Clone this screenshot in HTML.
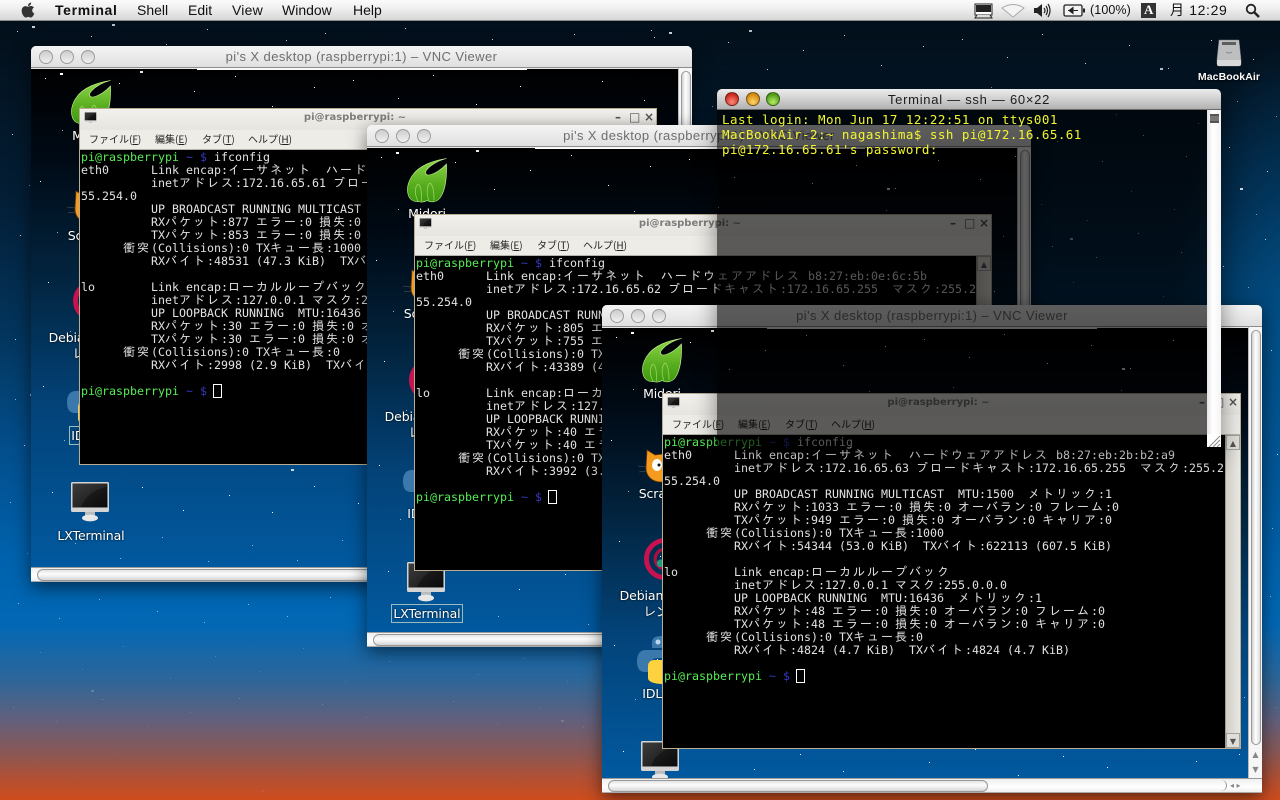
<!DOCTYPE html>
<html lang="ja"><head><meta charset="utf-8"><title>Terminal</title>
<style>
*{box-sizing:border-box}
html,body{margin:0;padding:0;width:1280px;height:800px;overflow:hidden;background:#000}
body{position:relative;font-family:"Liberation Sans","Noto Sans CJK JP",sans-serif}
.a,.a>*{position:absolute}
#wall{left:0;top:0;width:1280px;height:800px;background:radial-gradient(130px 300px at 1300px 340px,rgba(0,95,160,.75),rgba(0,95,160,0)),linear-gradient(180deg,#020d19 0,#03121f 60px,#031e36 200px,#03365f 340px,#034e8c 450px,#0062ad 560px,#0268b5 625px,#2d6699 680px,#62607c 720px,#8c5752 755px,#b45032 780px,#cf4c1c 800px)}
#wm{position:absolute;left:0;top:0;width:1280px;height:800px;-webkit-mask-image:linear-gradient(#000 0,#000 75%,rgba(0,0,0,.15) 92%);mask-image:linear-gradient(#000 0,#000 75%,rgba(0,0,0,.15) 92%)}
.sf{position:absolute;left:0;top:0;width:0;height:0}
.sf span{position:absolute;left:0;top:0;display:block}
.s1{width:1px;height:1px;background:transparent;box-shadow:14px 9px #fff,51px 33px #fff,88px 14px #fff,127px 41px #fff,163px 22px #fff,204px 7px #fff,241px 37px #fff,283px 18px #fff,322px 11px #fff,367px 29px #fff,402px 6px #fff,445px 35px #fff,489px 17px #fff,528px 40px #fff,571px 12px #fff,613px 31px #fff,648px 8px #fff,9px 112px #fff,46px 127px #fff,94px 108px #fff,133px 131px #fff,171px 118px #fff,212px 137px #fff,254px 116px #fff,291px 129px #fff,336px 104px #fff,378px 141px #fff,417px 113px #fff,462px 133px #fff,503px 107px #fff,546px 128px #fff,589px 119px #fff,627px 143px #fff,17px 213px #fff,58px 228px #fff,98px 209px #fff,156px 221px #fff,203px 232px #fff,247px 214px #fff,286px 226px #fff,329px 207px #fff,371px 234px #fff,412px 218px #fff,456px 229px #fff,498px 205px #fff,541px 224px #fff,583px 238px #fff,625px 211px #fff,12px 317px #fff,55px 331px #fff,101px 309px #fff,147px 336px #fff,189px 322px #fff,238px 308px #fff,276px 339px #fff,321px 314px #fff,365px 327px #fff,409px 342px #fff,452px 311px #fff,496px 333px #fff,539px 318px #fff,582px 337px #fff,631px 322px #fff,21px 423px #fff,63px 437px #fff,111px 418px #fff,152px 441px #fff,198px 426px #fff,241px 443px #fff,283px 417px #fff,327px 434px #fff,373px 421px #fff,416px 447px #fff,461px 428px #fff,505px 439px #fff,549px 415px #fff,594px 433px #fff,637px 426px #fff}
.s2{width:1px;height:1px;background:transparent;box-shadow:31px 61px #9fb4c6,72px 78px #9fb4c6,109px 66px #9fb4c6,148px 89px #9fb4c6,186px 71px #9fb4c6,224px 94px #9fb4c6,267px 63px #9fb4c6,309px 82px #9fb4c6,351px 59px #9fb4c6,394px 91px #9fb4c6,431px 68px #9fb4c6,476px 86px #9fb4c6,519px 62px #9fb4c6,558px 95px #9fb4c6,597px 73px #9fb4c6,636px 88px #9fb4c6,26px 163px #9fb4c6,67px 178px #9fb4c6,104px 159px #9fb4c6,142px 184px #9fb4c6,193px 167px #9fb4c6,233px 181px #9fb4c6,274px 161px #9fb4c6,318px 189px #9fb4c6,359px 158px #9fb4c6,401px 176px #9fb4c6,447px 192px #9fb4c6,491px 163px #9fb4c6,534px 181px #9fb4c6,577px 155px #9fb4c6,616px 186px #9fb4c6,655px 169px #9fb4c6,39px 262px #9fb4c6,81px 279px #9fb4c6,122px 256px #9fb4c6,169px 288px #9fb4c6,214px 266px #9fb4c6,259px 281px #9fb4c6,302px 258px #9fb4c6,344px 291px #9fb4c6,388px 271px #9fb4c6,433px 254px #9fb4c6,477px 284px #9fb4c6,523px 268px #9fb4c6,566px 291px #9fb4c6,608px 259px #9fb4c6,649px 277px #9fb4c6,33px 371px #9fb4c6,76px 388px #9fb4c6,118px 362px #9fb4c6,161px 379px #9fb4c6,207px 391px #9fb4c6,252px 366px #9fb4c6,294px 384px #9fb4c6,339px 359px #9fb4c6,383px 377px #9fb4c6,424px 393px #9fb4c6,469px 368px #9fb4c6,513px 386px #9fb4c6,557px 361px #9fb4c6,601px 382px #9fb4c6,642px 369px #9fb4c6,44px 474px #9fb4c6,89px 489px #9fb4c6,131px 468px #9fb4c6,177px 492px #9fb4c6,221px 476px #9fb4c6,266px 491px #9fb4c6,311px 471px #9fb4c6,356px 486px #9fb4c6,398px 464px #9fb4c6,443px 493px #9fb4c6,487px 477px #9fb4c6,531px 496px #9fb4c6,573px 468px #9fb4c6,619px 487px #9fb4c6}
.s3{width:3px;height:2px;background:transparent;box-shadow:29px 4px #fff,109px 2px #dfe9f2,200px 70px #cfd9e2,340px 120px #cfd9e2,520px 40px #dfe9f2,90px 300px #cfd9e2,430px 210px #cfd9e2,600px 160px #fff,260px 400px #cfd9e2,560px 330px #fff}
#bar{left:0;top:0;width:1280px;height:21px;background:linear-gradient(#fbfbfb,#f0f0f0 40%,#d6d6d6);border-bottom:1px solid #8a8a8a;z-index:50;color:#111;font-size:14px;line-height:21px}
#bar>span{top:0;white-space:nowrap}
.vnc{position:absolute;background:#e8e8e8;border-radius:5px 5px 0 0;box-shadow:0 5px 18px rgba(0,0,0,.55);overflow:hidden}
.tb{position:absolute;left:0;right:0;top:0;height:22px;background:linear-gradient(#f4f4f4,#e0e0e0);border-bottom:1px solid #8c8c8c;color:#6e6e6e;font-size:13px;line-height:22px;text-align:center;letter-spacing:.42px}
.dot{position:absolute;top:4px;width:14px;height:14px;border-radius:50%;background:linear-gradient(#cdcdcd,#f0f0f0);border:1px solid #9c9c9c}
.wl{position:absolute;top:22px;height:2px;width:330px;background:#f8f8f8;z-index:2}
.vp{position:absolute;left:0;top:23px;right:14px;bottom:15px;overflow:hidden;background:linear-gradient(180deg,#000 0,#000a15 18%,#02243f 42%,#034379 68%,#01599f 100%)}
.vs{position:absolute;right:0;top:22px;bottom:15px;width:14px;background:#f6f6f6;border-left:1px solid #bbb}
.vs u{position:absolute;left:2px;right:1px;top:3px;bottom:33px;border-radius:6px;background:linear-gradient(90deg,#d0d0d0,#fff 45%,#ddd);border:1px solid #999}
.hs{position:absolute;left:0;right:0;bottom:0;height:15px;background:linear-gradient(#efefef,#fff 60%,#eee);border-top:1px solid #9a9a9a;border-bottom:1px solid #aaa}
.hs u{position:absolute;left:6px;width:380px;top:1px;bottom:0;border-radius:7px;background:linear-gradient(#e4e4e4,#fcfcfc 40%,#f2f2f2 60%,#d4d4d4);border:1px solid #999}
.ic{position:absolute;overflow:visible}
.lb{position:absolute;left:0;width:120px;text-align:center;color:#fff;font:12.5px/16px "DejaVu Sans","Noto Sans CJK JP",sans-serif;text-shadow:0 0 2px #000;white-space:nowrap;letter-spacing:-.1px}
.lb span{padding:0 1px}
.box span{outline:1px solid #9bb;padding:1px 1px}
.xt{position:absolute;background:#ecebe6;border:1px solid #b9ad91;overflow:hidden}
.xh{position:absolute;left:0;right:0;top:0;height:21px;background:linear-gradient(#f1f0ec,#e7e5df);color:#7d7d7d;font:bold 10px/17px "DejaVu Sans",sans-serif;text-align:center;padding-right:26px}
.xh em{position:absolute;top:0;font:bold 12px/17px "DejaVu Sans",sans-serif;color:#555}
.xm{position:absolute;left:0;right:0;top:21px;height:20px;border-bottom:1px solid #b4b2aa;background:#eeece7;color:#222;font:10px/18px "Noto Sans CJK JP",sans-serif}
.xm span{position:absolute;top:0;white-space:nowrap}
.xb{position:absolute;left:0;right:15px;top:41px;bottom:0;background:#000;overflow:hidden;color:#e2e2e2;font:11.63px/13px "DejaVu Sans Mono",monospace;padding:1px 0 0 1px}
.xb div{height:13px;white-space:pre;overflow:visible}
.xb b{font:12px/13px "IPAGothic","Noto Sans CJK JP",sans-serif;letter-spacing:2px}
.xb i{font-style:normal;color:#55ee55}
.xb s{text-decoration:none;color:#3338c0}
.xb tt{display:inline-block;width:9px;height:14px;border:1px solid #fff;vertical-align:top;margin:-1px 0 0 -1px;font-size:0}
.xs{position:absolute;right:0;top:41px;bottom:0;width:15px;background:linear-gradient(90deg,#cfcdc6,#e9e8e3);border-left:1px solid #9f9d96}
.xs u,.xs em{position:absolute;left:0;right:0;height:15px;background:#e0ded8;color:#555;font:8px/15px "DejaVu Sans",sans-serif;text-align:center;text-decoration:none;border:1px solid #a4a29c}
#ssh{position:absolute;left:717px;top:89px;width:504px;height:358px;z-index:40;box-shadow:0 6px 24px rgba(0,0,0,.45);border-radius:5px 5px 0 0}
#sst{position:absolute;left:0;top:0;right:0;height:21px;border-radius:5px 5px 0 0;background:linear-gradient(#ececec,#cdcdcd 55%,#b1b1b1);border-bottom:1px solid #6a6a6a;color:#1c1c1c;font-size:13px;line-height:21px;text-align:center;letter-spacing:.72px}
#ssb{position:absolute;left:0;top:21px;width:490px;bottom:0;background:rgba(0,0,0,.62);color:#f4f62e;font:12.5px/15px "DejaVu Sans Mono",monospace;letter-spacing:.47px;padding:2px 0 0 5px;white-space:pre}
#ssv{position:absolute;right:0;top:21px;width:14px;bottom:0;background:linear-gradient(90deg,#e4e4e4,#fff 40%,#f4f4f4)}
.tl{position:absolute;top:3px;width:14px;height:14px;border-radius:50%;border:1px solid rgba(0,0,0,.45)}
</style></head><body>
<svg width="0" height="0" style="position:absolute"><defs>
<linearGradient id="gl" x1="0" y1="0" x2="0" y2="1"><stop offset="0" stop-color="#8fd94a"/><stop offset=".6" stop-color="#58ad1e"/><stop offset="1" stop-color="#3f9a10"/></linearGradient>
<linearGradient id="sc" x1="0" y1="0" x2="1" y2="1"><stop offset="0" stop-color="#3d3d3d"/><stop offset="1" stop-color="#111"/></linearGradient>
<symbol id="mid" viewBox="0 0 40 45"><path d="M39.500 .5C28 2 12 7 5 18C1 24-.5 31 1 36C2 41 6 44 11 43.500C14 44.500 18 44 20 42.500C24 45 30 44 33 40C38 33 40 20 39.500 6C35 11 28 16 22 17C19 17.500 18 15 19 13C22 8 30 3 39.500 .5Z" fill="url(#gl)" stroke="#c8f09a" stroke-width=".6"/><path d="M11 43C7 36 8 28 11 26C14 27 15 36 14.500 43M22 42.500C19 36 20 27 23 25C26 27 27 35 27 42" fill="none" stroke="#b4e87c" stroke-width=".8" opacity=".7"/></symbol>
<symbol id="cat" viewBox="0 0 50 40"><path d="M0 21L8 22M1 27L8 26" stroke="#bbb" stroke-width=".5" opacity=".45"/><path d="M9 5L17 10C22 9 27 9 31 10L38 4L39 22C39 32 30 37 23 37C14 37 8 31 8 23Z" fill="#f49a1e" stroke="#6b3a08" stroke-width=".8"/><ellipse cx="19" cy="20" rx="5" ry="6" fill="#fff"/><ellipse cx="32" cy="20" rx="5" ry="6" fill="#fff"/><circle cx="21" cy="20" r="1.500" fill="#111"/><circle cx="30" cy="20" r="1.500" fill="#111"/></symbol>
<symbol id="deb" viewBox="0 0 40 44"><circle cx="20" cy="22" r="17" fill="none" stroke="#c8124f" stroke-width="4.500"/><path d="M20 13a9 9 0 1 0 0 18" fill="none" stroke="#a8103f" stroke-width="3"/><circle cx="16" cy="26" r="3.500" fill="#1f9d7f"/></symbol>
<symbol id="py" viewBox="0 0 50 48"><path d="M25 0C17 0 15 3 15 7V12H26V14H9C3 14 0 18 0 25C0 33 3 36 8 36H13V29C13 24 17 22 21 22H31C35 22 37 20 37 16V7C37 3 33 0 25 0Z" fill="#3b78ab"/><circle cx="21" cy="6" r="2.500" fill="#bcd7ee"/><path d="M35 14V21C35 25 31 24 27 24H17C13 24 11 27 11 30V42C11 46 18 48 26 48C33 48 37 45 37 42V37H26V35H42C48 35 50 31 50 25C50 18 47 14 43 14Z" fill="#fdd23e"/></symbol>
<symbol id="mon" viewBox="0 0 38 40"><rect x="0" y="0" width="38" height="30" rx="1.500" fill="#d4d4d4"/><rect x="1.500" y="1.500" width="35" height="24" fill="url(#sc)"/><path d="M10 25C14 14 24 7 36 5V25Z" fill="#000" opacity=".35"/><rect x="14" y="30" width="10" height="4" fill="#bbb"/><ellipse cx="19" cy="36" rx="8" ry="3.400" fill="#e8e8e8"/></symbol>
</defs></svg>

<div id="wall" class="a"><div id="wm">
 <div class="sf" style="left:3px;top:22px;opacity:.8"><span class="s1"></span><span class="s2"></span><span class="s3"></span></div>
 <div class="sf" style="left:640px;top:28px;opacity:.8"><span class="s1"></span><span class="s2"></span><span class="s3"></span></div>
 <div class="sf" style="left:1px;top:390px;opacity:.6"><span class="s1"></span><span class="s2"></span><span class="s3"></span></div>
 <div class="sf" style="left:645px;top:385px;opacity:.6"><span class="s1"></span><span class="s2"></span><span class="s3"></span></div>
</div></div>

<!-- WINDOW 1 -->
<div class="vnc" style="left:31px;top:46px;width:661px;height:536px;z-index:1">
 <div class="tb">pi's X desktop (raspberrypi:1) – VNC Viewer</div>
 <div class="dot" style="left:8px"></div><div class="dot" style="left:29px"></div><div class="dot" style="left:50px"></div>
 <div class="vp"><div class="sf"><span class="s1"></span><span class="s2"></span><span class="s3"></span></div>
  <svg class="ic" style="left:40px;top:11px" width="40" height="45"><use href="#mid"/></svg>
  <div class="lb" style="top:59px">Midori</div>
  <svg class="ic" style="left:36px;top:117px" width="50" height="40"><use href="#cat"/></svg>
  <div class="lb" style="top:159px">Scratch</div>
  <svg class="ic" style="left:41px;top:208px" width="44" height="48"><use href="#deb"/></svg>
  <div class="lb" style="top:261px">Debian リファ<br>レンス</div>
  <svg class="ic" style="left:36px;top:308px" width="50" height="48"><use href="#py"/></svg>
  <div class="lb box" style="top:359px"><span>IDLE 3</span></div>
  <svg class="ic" style="left:40px;top:413px" width="38" height="40"><use href="#mon"/></svg>
  <div class="lb" style="top:459px">LXTerminal</div>
 </div>
 <div class="wl" style="left:166px"></div>
 <div class="vs"><u></u></div>
 <div class="hs"><u></u></div>
 <div class="xt" style="left:48px;top:62px;width:578px;height:357px">
  <div class="xh"><svg class="ic" style="left:4px;top:3px" width="13" height="13"><use href="#mon"/></svg>pi@raspberrypi: ~<em style="left:535px">–</em><em style="left:549px">□</em><em style="left:564px">×</em></div>
  <div class="xm"><span style="left:9px">ファイル(<u>F</u>)</span><span style="left:75px">編集(<u>E</u>)</span><span style="left:122px">タブ(<u>T</u>)</span><span style="left:168px">ヘルプ(<u>H</u>)</span></div>
  <div class="xb"><div><i>pi@raspberrypi</i> <s>~ $</s> ifconfig</div>
<div>eth0      Link encap:<b>イーサネット</b>  <b>ハードウェアアドレス</b> b8:27:eb:c0:b4:dd</div>
<div>          inet<b>アドレス</b>:172.16.65.61 <b>ブロードキャスト</b>:172.16.65.255  <b>マスク</b>:255.2</div>
<div>55.254.0</div>
<div>          UP BROADCAST RUNNING MULTICAST  MTU:1500  <b>メトリック</b>:1</div>
<div>          RX<b>パケット</b>:877 <b>エラー</b>:0 <b>損失</b>:0 <b>オーバラン</b>:0 <b>フレーム</b>:0</div>
<div>          TX<b>パケット</b>:853 <b>エラー</b>:0 <b>損失</b>:0 <b>オーバラン</b>:0 <b>キャリア</b>:0</div>
<div>      <b>衝突</b>(Collisions):0 TX<b>キュー長</b>:1000</div>
<div>          RX<b>バイト</b>:48531 (47.3 KiB)  TX<b>バイト</b>:514322 (502.2 KiB)</div>
<div> </div>
<div>lo        Link encap:<b>ローカルループバック</b></div>
<div>          inet<b>アドレス</b>:127.0.0.1 <b>マスク</b>:255.0.0.0</div>
<div>          UP LOOPBACK RUNNING  MTU:16436  <b>メトリック</b>:1</div>
<div>          RX<b>パケット</b>:30 <b>エラー</b>:0 <b>損失</b>:0 <b>オーバラン</b>:0 <b>フレーム</b>:0</div>
<div>          TX<b>パケット</b>:30 <b>エラー</b>:0 <b>損失</b>:0 <b>オーバラン</b>:0 <b>キャリア</b>:0</div>
<div>      <b>衝突</b>(Collisions):0 TX<b>キュー長</b>:0</div>
<div>          RX<b>バイト</b>:2998 (2.9 KiB)  TX<b>バイト</b>:2998 (2.9 KiB)</div>
<div> </div>
<div><i>pi@raspberrypi</i> <s>~ $</s> <tt>_</tt></div></div>
  <div class="xs"><em style="top:0">▲</em><em style="bottom:0">▼</em></div>
 </div>
</div>

<!-- WINDOW 2 -->
<div class="vnc" style="left:367px;top:125px;width:664px;height:522px;z-index:2">
 <div class="tb">pi's X desktop (raspberrypi:1) – VNC Viewer</div>
 <div class="dot" style="left:8px"></div><div class="dot" style="left:29px"></div><div class="dot" style="left:50px"></div>
 <div class="vp"><div class="sf"><span class="s1"></span><span class="s2"></span><span class="s3"></span></div>
  <svg class="ic" style="left:40px;top:10px" width="40" height="45"><use href="#mid"/></svg>
  <div class="lb" style="top:58px">Midori</div>
  <svg class="ic" style="left:36px;top:117px" width="50" height="40"><use href="#cat"/></svg>
  <div class="lb" style="top:158px">Scratch</div>
  <svg class="ic" style="left:41px;top:208px" width="44" height="48"><use href="#deb"/></svg>
  <div class="lb" style="top:261px">Debian リファ<br>レンス</div>
  <svg class="ic" style="left:36px;top:308px" width="50" height="48"><use href="#py"/></svg>
  <div class="lb" style="top:358px">IDLE 3</div>
  <svg class="ic" style="left:40px;top:414px" width="38" height="40"><use href="#mon"/></svg>
  <div class="lb box" style="top:458px"><span>LXTerminal</span></div>
 </div>
 <div class="wl" style="left:168px"></div>
 <div class="vs"><u></u></div>
 <div class="hs"><u></u></div>
 <div class="xt" style="left:47px;top:89px;width:578px;height:357px">
  <div class="xh"><svg class="ic" style="left:4px;top:3px" width="13" height="13"><use href="#mon"/></svg>pi@raspberrypi: ~<em style="left:535px">–</em><em style="left:549px">□</em><em style="left:564px">×</em></div>
  <div class="xm"><span style="left:9px">ファイル(<u>F</u>)</span><span style="left:75px">編集(<u>E</u>)</span><span style="left:122px">タブ(<u>T</u>)</span><span style="left:168px">ヘルプ(<u>H</u>)</span></div>
  <div class="xb"><div><i>pi@raspberrypi</i> <s>~ $</s> ifconfig</div>
<div>eth0      Link encap:<b>イーサネット</b>  <b>ハードウェアアドレス</b> b8:27:eb:0e:6c:5b</div>
<div>          inet<b>アドレス</b>:172.16.65.62 <b>ブロードキャスト</b>:172.16.65.255  <b>マスク</b>:255.2</div>
<div>55.254.0</div>
<div>          UP BROADCAST RUNNING MULTICAST  MTU:1500  <b>メトリック</b>:1</div>
<div>          RX<b>パケット</b>:805 <b>エラー</b>:0 <b>損失</b>:0 <b>オーバラン</b>:0 <b>フレーム</b>:0</div>
<div>          TX<b>パケット</b>:755 <b>エラー</b>:0 <b>損失</b>:0 <b>オーバラン</b>:0 <b>キャリア</b>:0</div>
<div>      <b>衝突</b>(Collisions):0 TX<b>キュー長</b>:1000</div>
<div>          RX<b>バイト</b>:43389 (42.3 KiB)  TX<b>バイト</b>:499120 (487.4 KiB)</div>
<div> </div>
<div>lo        Link encap:<b>ローカルループバック</b></div>
<div>          inet<b>アドレス</b>:127.0.0.1 <b>マスク</b>:255.0.0.0</div>
<div>          UP LOOPBACK RUNNING  MTU:16436  <b>メトリック</b>:1</div>
<div>          RX<b>パケット</b>:40 <b>エラー</b>:0 <b>損失</b>:0 <b>オーバラン</b>:0 <b>フレーム</b>:0</div>
<div>          TX<b>パケット</b>:40 <b>エラー</b>:0 <b>損失</b>:0 <b>オーバラン</b>:0 <b>キャリア</b>:0</div>
<div>      <b>衝突</b>(Collisions):0 TX<b>キュー長</b>:0</div>
<div>          RX<b>バイト</b>:3992 (3.8 KiB)  TX<b>バイト</b>:3992 (3.8 KiB)</div>
<div> </div>
<div><i>pi@raspberrypi</i> <s>~ $</s> <tt>_</tt></div></div>
  <div class="xs"><em style="top:0">▲</em><em style="bottom:0">▼</em></div>
 </div>
</div>

<!-- WINDOW 3 -->
<div class="vnc" style="left:602px;top:305px;width:660px;height:488px;z-index:3">
 <div class="tb">pi's X desktop (raspberrypi:1) – VNC Viewer</div>
 <div class="dot" style="left:8px"></div><div class="dot" style="left:29px"></div><div class="dot" style="left:50px"></div>
 <div class="vp"><div class="sf"><span class="s1"></span><span class="s2"></span><span class="s3"></span></div>
  <svg class="ic" style="left:40px;top:10px" width="40" height="45"><use href="#mid"/></svg>
  <div class="lb" style="top:58px">Midori</div>
  <svg class="ic" style="left:36px;top:117px" width="50" height="40"><use href="#cat"/></svg>
  <div class="lb" style="top:158px">Scratch</div>
  <svg class="ic" style="left:41px;top:207px" width="44" height="48"><use href="#deb"/></svg>
  <div class="lb" style="top:260px">Debian リファ<br>レンス</div>
  <svg class="ic" style="left:35px;top:308px" width="50" height="48"><use href="#py"/></svg>
  <div class="lb" style="top:358px">IDLE 3</div>
  <svg class="ic" style="left:39px;top:413px" width="38" height="40"><use href="#mon"/></svg>
 </div>
 <div class="wl" style="left:165px"></div>
 <div class="vs"><u></u><em style="position:absolute;left:0;right:0;bottom:18px;font:8px/10px 'DejaVu Sans';color:#888;text-align:center;font-style:normal">▲</em><em style="position:absolute;left:0;right:0;bottom:3px;font:8px/10px 'DejaVu Sans';color:#888;text-align:center;font-style:normal">▼</em></div>
 <div class="hs"><u style="width:380px"></u><span style="position:absolute;left:613px;top:1px;width:12px;bottom:1px;border-right:1px solid #999;border-radius:0 7px 7px 0"></span><span style="position:absolute;left:628px;top:0;font:8px/14px 'DejaVu Sans';color:#888">◂ ▸</span></div>
 <div class="xt" style="left:60px;top:88px;width:579px;height:356px">
  <div class="xh"><svg class="ic" style="left:4px;top:3px" width="13" height="13"><use href="#mon"/></svg>pi@raspberrypi: ~<em style="left:536px">–</em><em style="left:550px">□</em><em style="left:565px">×</em></div>
  <div class="xm" style="line-height:17px"><span style="left:9px">ファイル(<u>F</u>)</span><span style="left:75px">編集(<u>E</u>)</span><span style="left:122px">タブ(<u>T</u>)</span><span style="left:168px">ヘルプ(<u>H</u>)</span></div>
  <div class="xb"><div><i>pi@raspberrypi</i> <s>~ $</s> ifconfig</div>
<div>eth0      Link encap:<b>イーサネット</b>  <b>ハードウェアアドレス</b> b8:27:eb:2b:b2:a9</div>
<div>          inet<b>アドレス</b>:172.16.65.63 <b>ブロードキャスト</b>:172.16.65.255  <b>マスク</b>:255.2</div>
<div>55.254.0</div>
<div>          UP BROADCAST RUNNING MULTICAST  MTU:1500  <b>メトリック</b>:1</div>
<div>          RX<b>パケット</b>:1033 <b>エラー</b>:0 <b>損失</b>:0 <b>オーバラン</b>:0 <b>フレーム</b>:0</div>
<div>          TX<b>パケット</b>:949 <b>エラー</b>:0 <b>損失</b>:0 <b>オーバラン</b>:0 <b>キャリア</b>:0</div>
<div>      <b>衝突</b>(Collisions):0 TX<b>キュー長</b>:1000</div>
<div>          RX<b>バイト</b>:54344 (53.0 KiB)  TX<b>バイト</b>:622113 (607.5 KiB)</div>
<div> </div>
<div>lo        Link encap:<b>ローカルループバック</b></div>
<div>          inet<b>アドレス</b>:127.0.0.1 <b>マスク</b>:255.0.0.0</div>
<div>          UP LOOPBACK RUNNING  MTU:16436  <b>メトリック</b>:1</div>
<div>          RX<b>パケット</b>:48 <b>エラー</b>:0 <b>損失</b>:0 <b>オーバラン</b>:0 <b>フレーム</b>:0</div>
<div>          TX<b>パケット</b>:48 <b>エラー</b>:0 <b>損失</b>:0 <b>オーバラン</b>:0 <b>キャリア</b>:0</div>
<div>      <b>衝突</b>(Collisions):0 TX<b>キュー長</b>:0</div>
<div>          RX<b>バイト</b>:4824 (4.7 KiB)  TX<b>バイト</b>:4824 (4.7 KiB)</div>
<div> </div>
<div><i>pi@raspberrypi</i> <s>~ $</s> <tt>_</tt></div></div>
  <div class="xs"><em style="top:0">▲</em><em style="bottom:0">▼</em></div>
 </div>
</div>

<!-- SSH TERMINAL -->
<div id="ssh">
 <div id="ssb">Last login: Mon Jun 17 12:22:51 on ttys001
MacBookAir-2:~ nagashima$ ssh pi@172.16.65.61
pi@172.16.65.61's password:</div>
 <div id="sst">Terminal — ssh — 60×22</div>
 <div class="tl" style="left:8px;background:radial-gradient(circle at 50% 75%,#ff8a7a,#c92a20 70%)"></div>
 <div class="tl" style="left:29px;background:radial-gradient(circle at 50% 75%,#ffd66a,#d38a10 70%)"></div>
 <div class="tl" style="left:49px;background:radial-gradient(circle at 50% 75%,#b8ec6a,#4f9e18 70%)"></div>
 <div id="ssv">
  <div style="position:absolute;left:3px;top:4px;width:9px;height:9px;background:#777;border-top:2px solid #555;border-bottom:2px solid #555"></div>
  <svg style="position:absolute;left:0;bottom:0" width="14" height="13"><rect width="14" height="13" fill="#fff"/><path d="M13 2L2 13M13 6L6 13M13 10L10 13" stroke="#888"/></svg>
 </div>
</div>

<!-- DESKTOP ICON -->
<svg class="ic" style="left:1216px;top:39px;z-index:5" width="26" height="28"><path d="M3 1H23L25 20V25Q25 27 23 27H3Q1 27 1 25V20Z" fill="#bcbec0" stroke="#777" stroke-width=".5"/><path d="M1 21H25V25Q25 27 23 27H3Q1 27 1 25Z" fill="#d8d9da"/><rect x="6" y="3" width="14" height="3" fill="#5c5e60"/><path d="M10 13Q13 15 16 13" fill="none" stroke="#888"/></svg>
<div style="position:absolute;left:1189px;width:80px;top:70px;text-align:center;color:#fff;font:bold 10.5px/14px 'Liberation Sans',sans-serif;text-shadow:0 1px 2px #000;z-index:5;letter-spacing:.1px">MacBookAir</div>

<!-- MENU BAR -->
<div id="bar" class="a">
 <svg style="left:17px;top:0" width="22" height="20" viewBox="0 0 24 24"><path fill="#333" d="M17.05 20.28c-.98.95-2.05.8-3.08.35-1.09-.46-2.09-.48-3.24 0-1.44.62-2.2.44-3.06-.35C2.79 15.25 3.51 7.59 9.05 7.31c1.35.07 2.29.74 3.08.8 1.18-.24 2.31-.93 3.57-.84 1.51.12 2.65.72 3.4 1.8-3.12 1.87-2.38 5.98.48 7.13-.57 1.5-1.31 2.99-2.54 4.09zM12.03 7.25c-.15-2.23 1.66-4.07 3.74-4.25.29 2.58-2.34 4.5-3.74 4.25z"/></svg>
 <span style="left:55px;font-weight:bold;letter-spacing:.65px">Terminal</span>
 <span style="left:137px">Shell</span>
 <span style="left:188px">Edit</span>
 <span style="left:232px;letter-spacing:.2px">View</span>
 <span style="left:282px">Window</span>
 <span style="left:353px">Help</span>
 <svg style="left:974px;top:3px" width="19" height="16"><rect x="1" y="1" width="17" height="11" fill="#fff" stroke="#222"/><rect x="2" y="2" width="15" height="7" fill="#222"/><path d="M3 12L1 15H18L16 12" fill="#ddd" stroke="#222"/></svg>
 <svg style="left:1001px;top:3px" width="24" height="15"><path d="M1 5Q12-2 23 5L12 14Z" fill="#f4f4f4" stroke="#aaa"/></svg>
 <svg style="left:1033px;top:3px" width="19" height="15"><path d="M1 5H4L9 1V14L4 10H1Z" fill="#222"/><path d="M11 5Q13 7.500 11 10M13 3Q16 7.500 13 12M15 1Q19 7.500 15 14" fill="none" stroke="#222" stroke-width="1.200"/></svg>
 <svg style="left:1063px;top:4px" width="23" height="13"><rect x="1" y="1" width="18" height="11" rx="1.500" fill="#f3f3f3" stroke="#222" stroke-width="1.300"/><rect x="20" y="4.500" width="2" height="4" fill="#222"/><path d="M5 6.500H15M10 3.500L6 6.500L10 9.500Z" fill="#222" stroke="#222"/></svg>
 <span style="left:1090px;font-size:12.5px;letter-spacing:.1px">(100%)</span>
 <svg style="left:1141px;top:3px" width="16" height="16"><rect width="15" height="15" fill="#333"/></svg>
 <span style="left:1144px;top:0;color:#fff;font:bold 13px/20px 'Liberation Serif',serif">A</span>
 <span style="left:1170px;letter-spacing:.65px;font-family:'Liberation Sans','Noto Sans CJK JP',sans-serif">月 12:29</span>
 <svg style="left:1245px;top:3px" width="15" height="15"><circle cx="6" cy="6" r="4.300" fill="none" stroke="#222" stroke-width="1.800"/><path d="M9 9L14 14" stroke="#222" stroke-width="2.400"/></svg>
</div>
</body></html>
